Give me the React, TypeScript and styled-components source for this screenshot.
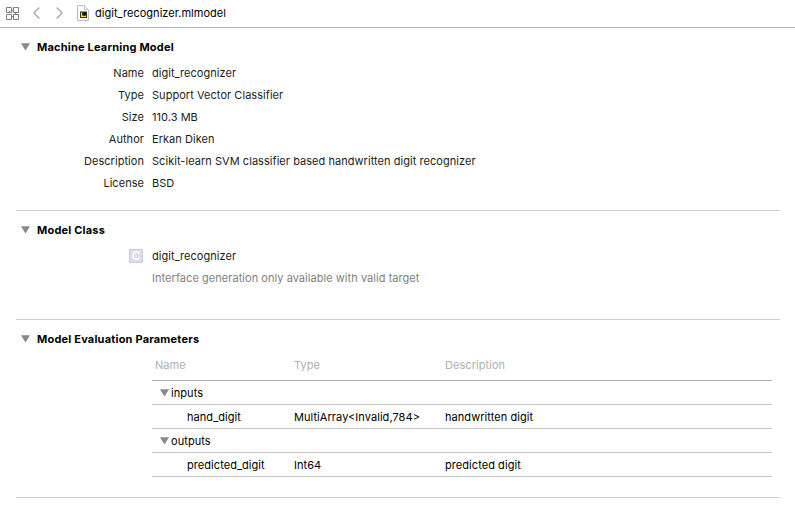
import React from "react";
import styled, { createGlobalStyle } from "styled-components";

const GlobalStyle = createGlobalStyle`
  * { box-sizing: border-box; }
  body {
    margin: 0;
    background: #fff;
    color: #1c1c1c;
    font-family: Inter, "Liberation Sans", sans-serif;
    font-size: 11px;
    letter-spacing: 0.045px;
  }
`;

const Window = styled.main`
  min-height: 513px;
  overflow: hidden;
`;

const Toolbar = styled.header`
  display: flex;
  align-items: center;
  height: 28px;
  padding: 0 0 1px 6px;
  border-bottom: 1px solid #b2b2b2;
`;

const Icon = styled.svg<{ $gap: number }>`
  flex: none;
  display: block;
  margin-right: ${(p) => p.$gap}px;
`;

const FileName = styled.span`
  color: #000;
  letter-spacing: 0.03px;
`;

const Section = styled.section<{ $bottom: number }>`
  margin: 0 15px 0 16px;
  padding: 9px 0 ${(p) => p.$bottom}px;
  border-bottom: 1px solid #cfcfcf;
`;

const SectionHeader = styled.h2`
  display: flex;
  align-items: center;
  height: 20px;
  margin: 0 0 5px;
  padding-left: 5px;
  color: #000;
  font-size: 11px;
  font-weight: 700;
  letter-spacing: 0.2px;
`;

const Row = styled.div`
  display: grid;
  grid-template-columns: 128px 1fr;
  column-gap: 8px;
  align-items: center;
  height: 22px;
  white-space: nowrap;
`;

const Label = styled.span`
  justify-self: end;
`;

const Muted = styled.span`
  grid-column: 2;
  color: #7f7f7f;
`;

const ClassBadge = styled.span`
  justify-self: end;
  width: 14px;
  height: 14px;
  margin-right: 1px;
  border: 1px solid #d0c8e0;
  border-radius: 1px;
  background: #e0dbea;
  color: #fff;
  font-size: 11.5px;
  font-weight: 600;
  line-height: 12px;
  text-align: center;
  letter-spacing: 0;
`;

const Table = styled.div`
  margin: 0 8px 0 136px;
  color: #000;
  letter-spacing: 0.06px;
`;

const TableRow = styled.div<{ $head?: boolean }>`
  display: grid;
  grid-template-columns: 142px 151px 1fr;
  align-items: center;
  height: ${(p) => (p.$head ? 27 : 24)}px;
  padding-bottom: ${(p) => (p.$head ? 5 : 0)}px;
  border-bottom: 1px solid ${(p) => (p.$head ? "#acacac" : "#c8c8c8")};
  color: ${(p) => (p.$head ? "#b0b0b0" : "#000")};
`;

const Cell = styled.span<{ $indent?: number }>`
  padding-left: ${(p) => p.$indent ?? 0}px;
  white-space: nowrap;
`;

const Group = styled.span`
  display: flex;
  align-items: center;
  padding-left: 8px;
`;

const Triangle = ({ gap }: { gap: number }) => (
  <Icon $gap={gap} width="9" height="8" viewBox="0 0 9 8">
    <path d="M0 0.3H9L4.5 7.6Z" fill="#8a8a8a" />
  </Icon>
);

const details = [
  ["Name", "digit_recognizer"],
  ["Type", "Support Vector Classifier"],
  ["Size", "110.3 MB"],
  ["Author", "Erkan Diken"],
  ["Description", "Scikit-learn SVM classifier based handwritten digit recognizer"],
  ["License", "BSD"],
];

const groups = [
  { title: "inputs", name: "hand_digit", type: "MultiArray<Invalid,784>", description: "handwritten digit" },
  { title: "outputs", name: "predicted_digit", type: "Int64", description: "predicted digit" },
];

export default function App() {
  return (
    <Window>
      <GlobalStyle />
      <Toolbar>
        <Icon $gap={14} width="13" height="13" viewBox="0 0 13 13" fill="none" stroke="#808080">
          <path d="M.5.5h5v5h-5zM7.5.5h5v5h-5zM.5 7.5h5v5h-5zM7.5 7.5h5v5h-5zM3.5 3.5v2M5.5 3.5h2M9.5 5.5v2M5.5 9.5h2" />
        </Icon>
        <Icon $gap={16} width="7" height="12" viewBox="0 0 7 12" fill="none" stroke="#a5a5a5" strokeWidth="1.3">
          <path d="M6.3.5.8 6l5.5 5.5" />
        </Icon>
        <Icon $gap={14} width="7" height="12" viewBox="0 0 7 12" fill="none" stroke="#a5a5a5" strokeWidth="1.3">
          <path d="M.7.5 6.2 6 .7 11.5" />
        </Icon>
        <Icon $gap={6} width="12" height="16" viewBox="0 0 12 16">
          <path d="M.5.5h7l4 4v11H.5z" fill="#fafafa" stroke="#bdbdbd" />
          <path d="M7.5.5v4h4" fill="#eee" stroke="#c8c8c8" />
          <path d="M3 6.5h7v6.5H3z" fill="#38352c" />
          <path d="M4 7.5h1.5v3h3.5V12H4z" fill="#f2d936" />
          <path d="M5.5 7.5H9v3H5.5z" fill="#111" />
        </Icon>
        <FileName>digit_recognizer.mlmodel</FileName>
      </Toolbar>

      <Section $bottom={16}>
        <SectionHeader><Triangle gap={7} />Machine Learning Model</SectionHeader>
        {details.map(([label, value]) => (
          <Row key={label}>
            <Label>{label}</Label>
            <span>{value}</span>
          </Row>
        ))}
      </Section>

      <Section $bottom={30}>
        <SectionHeader><Triangle gap={7} />Model Class</SectionHeader>
        <Row>
          <ClassBadge>C</ClassBadge>
          <span>digit_recognizer</span>
        </Row>
        <Row>
          <Muted>Interface generation only available with valid target</Muted>
        </Row>
      </Section>

      <Section $bottom={20}>
        <SectionHeader><Triangle gap={7} />Model Evaluation Parameters</SectionHeader>
        <Table>
          <TableRow $head>
            <Cell $indent={3}>Name</Cell>
            <Cell>Type</Cell>
            <Cell>Description</Cell>
          </TableRow>
          {groups.map((g) => (
            <React.Fragment key={g.title}>
              <TableRow>
                <Group><Triangle gap={2} />{g.title}</Group>
              </TableRow>
              <TableRow>
                <Cell $indent={35}>{g.name}</Cell>
                <Cell>{g.type}</Cell>
                <Cell>{g.description}</Cell>
              </TableRow>
            </React.Fragment>
          ))}
        </Table>
      </Section>
    </Window>
  );
}
